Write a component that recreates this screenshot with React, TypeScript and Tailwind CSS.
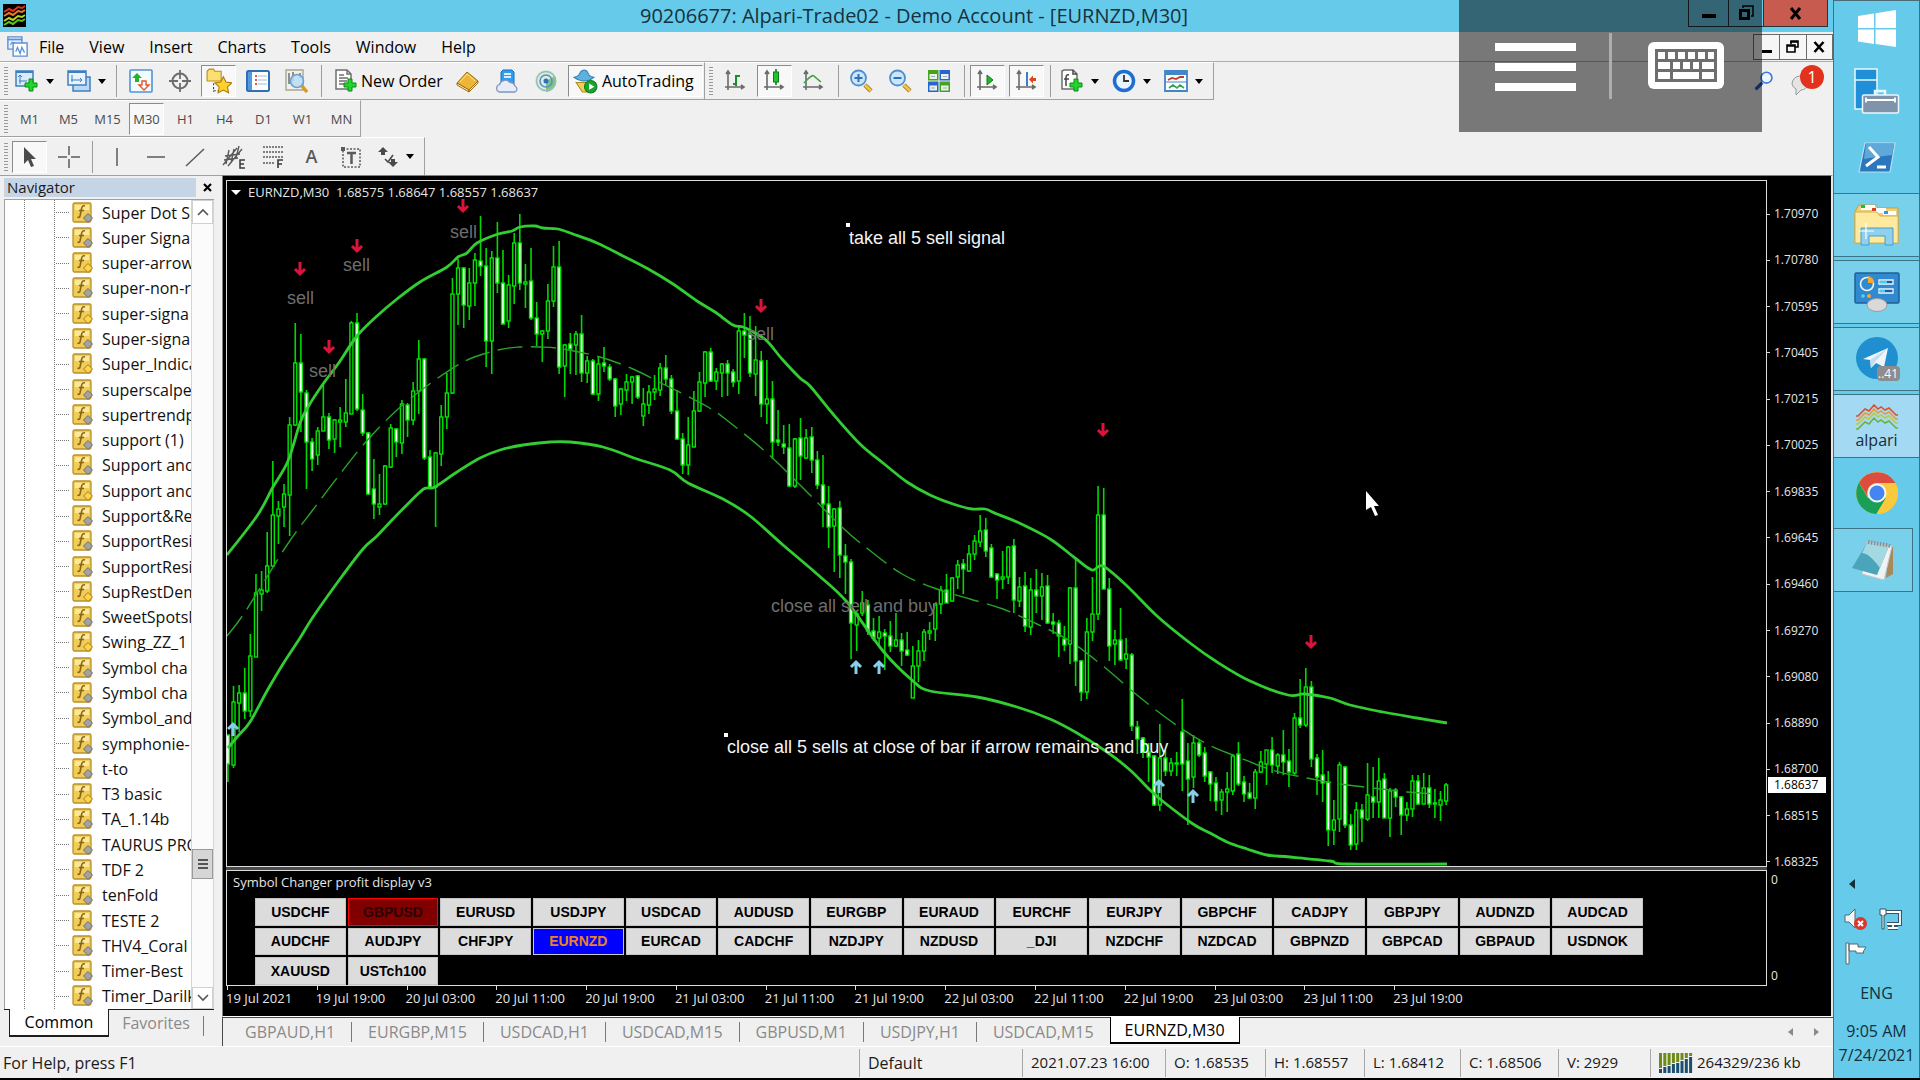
import { useState } from 'react';
import type { ReactNode } from 'react';

// [high, body top, body bottom, low, 1 = falling bar]
type Bar = [number, number, number, number, 0 | 1];

const BARS: Bar[] = [
  [555, 555, 584, 602, 1], [506, 522, 585, 588, 0], [505, 513, 523, 552, 0], [488, 513, 531, 539, 1], [454, 476, 531, 537, 0],
  [394, 413, 477, 477, 0], [391, 410, 414, 431, 0], [352, 386, 411, 413, 0], [281, 335, 386, 387, 0], [321, 329, 336, 364, 0],
  [304, 314, 327, 347, 0], [237, 245, 315, 356, 0], [143, 183, 245, 246, 0], [154, 183, 212, 252, 1], [210, 213, 262, 309, 1],
  [258, 262, 279, 291, 1], [247, 251, 275, 285, 0], [204, 237, 251, 251, 0], [233, 237, 260, 269, 1], [239, 240, 259, 273, 0],
  [227, 240, 242, 267, 0], [199, 233, 242, 247, 0], [141, 143, 234, 234, 0], [133, 143, 229, 231, 1], [214, 230, 253, 256, 1],
  [252, 253, 314, 315, 1], [279, 309, 324, 339, 1], [294, 324, 327, 335, 0], [285, 286, 324, 325, 0], [244, 248, 287, 288, 0],
  [248, 249, 262, 277, 1], [220, 224, 263, 274, 0], [223, 225, 240, 257, 1], [202, 211, 240, 245, 0], [160, 179, 211, 234, 0],
  [178, 179, 278, 280, 1], [270, 277, 307, 309, 1], [272, 273, 307, 347, 0], [225, 237, 274, 286, 0], [193, 213, 237, 249, 0],
  [98, 114, 213, 214, 0], [79, 88, 114, 145, 0], [87, 88, 125, 148, 1], [88, 103, 126, 140, 0], [73, 80, 103, 126, 0],
  [36, 81, 86, 96, 1], [68, 86, 161, 187, 1], [71, 78, 161, 194, 0], [42, 78, 103, 113, 1], [70, 103, 144, 144, 1],
  [95, 105, 141, 148, 0], [53, 63, 106, 124, 0], [34, 63, 103, 110, 1], [84, 102, 104, 128, 0], [68, 101, 138, 140, 1],
  [122, 138, 154, 166, 1], [150, 151, 154, 182, 0], [104, 121, 151, 159, 0], [66, 87, 121, 127, 0], [61, 87, 187, 194, 1],
  [164, 165, 186, 217, 0], [153, 164, 169, 194, 1], [151, 154, 165, 195, 0], [135, 154, 193, 202, 1], [176, 181, 193, 203, 0],
  [179, 181, 214, 215, 1], [177, 184, 214, 221, 0], [167, 183, 186, 192, 1], [184, 187, 199, 201, 1], [198, 199, 226, 237, 1],
  [208, 209, 224, 235, 0], [194, 202, 210, 221, 0], [196, 197, 202, 224, 0], [195, 196, 217, 219, 1], [208, 224, 236, 246, 0],
  [205, 212, 225, 234, 0], [195, 209, 212, 220, 0], [183, 188, 210, 216, 0], [175, 188, 199, 205, 1], [195, 199, 231, 234, 1],
  [210, 231, 259, 260, 1], [253, 259, 285, 294, 1], [237, 265, 285, 295, 0], [211, 231, 267, 267, 0], [192, 202, 231, 232, 0],
  [171, 172, 203, 217, 0], [168, 172, 201, 202, 1], [188, 192, 201, 210, 0], [183, 184, 193, 217, 0], [180, 184, 193, 216, 1],
  [189, 192, 202, 207, 1], [146, 151, 201, 214, 0], [133, 151, 155, 178, 1], [136, 154, 193, 197, 1], [146, 180, 194, 216, 0],
  [171, 181, 224, 237, 1], [180, 219, 224, 244, 0], [201, 219, 262, 279, 1], [230, 260, 262, 266, 1], [245, 264, 267, 274, 1],
  [244, 268, 306, 307, 1], [258, 259, 306, 308, 0], [238, 258, 276, 300, 1], [249, 258, 278, 279, 0], [247, 257, 280, 293, 1],
  [271, 280, 305, 309, 1], [275, 305, 324, 347, 1], [306, 324, 347, 368, 1], [328, 329, 346, 392, 0], [321, 328, 375, 398, 1],
  [364, 376, 382, 414, 1], [379, 382, 443, 479, 1], [431, 434, 445, 471, 0], [411, 423, 433, 436, 0], [420, 425, 451, 455, 1],
  [438, 451, 458, 461, 1], [436, 452, 458, 466, 0], [449, 453, 456, 490, 1], [441, 456, 466, 472, 1], [433, 460, 466, 467, 0],
  [453, 460, 471, 486, 1], [452, 470, 475, 476, 1], [466, 486, 518, 518, 0], [460, 471, 486, 502, 0], [449, 452, 471, 481, 0],
  [442, 451, 453, 460, 0], [423, 424, 449, 461, 0], [406, 410, 424, 434, 0], [394, 410, 423, 423, 1], [397, 398, 421, 422, 0],
  [380, 385, 397, 409, 0], [379, 384, 389, 414, 1], [365, 374, 391, 392, 0], [355, 361, 374, 380, 0], [335, 351, 362, 367, 0],
  [338, 350, 371, 377, 1], [364, 368, 397, 398, 1], [393, 394, 400, 419, 1], [371, 397, 399, 409, 0], [366, 367, 397, 404, 0],
  [359, 366, 420, 433, 1], [397, 407, 421, 427, 0], [392, 406, 446, 452, 1], [398, 410, 447, 455, 0], [389, 410, 416, 433, 1],
  [393, 407, 416, 440, 0], [395, 406, 443, 444, 1], [433, 442, 444, 454, 1], [440, 443, 456, 477, 1], [446, 459, 465, 471, 1],
  [407, 408, 464, 484, 0], [379, 408, 481, 506, 1], [480, 481, 512, 521, 1], [438, 452, 512, 519, 0], [397, 434, 452, 461, 0],
  [306, 335, 434, 440, 0], [308, 335, 409, 409, 1], [398, 409, 466, 481, 1], [450, 460, 464, 485, 0], [428, 460, 480, 481, 1],
  [458, 474, 479, 489, 0], [473, 475, 546, 551, 1], [541, 547, 559, 574, 1], [557, 558, 572, 578, 1], [563, 572, 577, 602, 1],
  [575, 576, 625, 626, 1], [544, 578, 625, 631, 0], [570, 578, 591, 596, 1], [578, 583, 591, 596, 0], [572, 583, 584, 596, 1],
  [519, 552, 584, 611, 1], [563, 581, 599, 645, 1], [555, 563, 597, 608, 0], [559, 563, 575, 577, 1], [567, 573, 596, 602, 1],
  [591, 592, 604, 621, 1], [597, 603, 621, 631, 1], [609, 612, 620, 635, 0], [592, 609, 612, 632, 0], [574, 576, 611, 615, 0],
  [562, 574, 604, 606, 1], [596, 602, 614, 622, 1], [603, 613, 618, 619, 1], [589, 592, 618, 629, 0], [571, 582, 592, 593, 0],
  [570, 570, 584, 605, 0], [557, 570, 585, 593, 1], [573, 575, 586, 594, 0], [550, 575, 582, 595, 1], [569, 581, 592, 607, 1],
  [533, 538, 593, 595, 0], [499, 538, 545, 548, 1], [488, 507, 545, 547, 0], [501, 507, 579, 587, 1], [574, 578, 597, 615, 1],
  [570, 595, 603, 622, 1], [591, 602, 650, 666, 1], [620, 640, 650, 665, 0], [582, 585, 639, 652, 0], [586, 587, 645, 648, 1],
  [634, 645, 665, 670, 1], [622, 630, 664, 670, 0], [624, 630, 638, 662, 1], [583, 615, 639, 641, 0], [587, 617, 622, 638, 1],
  [578, 601, 622, 638, 0], [593, 599, 638, 638, 1], [608, 611, 638, 657, 0], [608, 610, 617, 627, 1], [616, 617, 635, 655, 1],
  [622, 629, 635, 641, 0], [595, 601, 629, 637, 0], [595, 601, 624, 625, 1], [593, 608, 624, 624, 0], [595, 608, 624, 628, 1],
  [609, 623, 624, 638, 0], [611, 620, 625, 641, 0], [603, 605, 621, 625, 0],
];

const UPPER_BAND =
  '227,375 257,336 273,307 288,281 300,243 308,227 323,204 338,184 357,156 377,136 397,119 420,102 447,87 458,77 467,73 477,63 498,54 512,51 520,47 535,46 543,48 558,49 573,54 597,63 623,76 650,90 673,104 697,121 715,132 733,145 743,147 755,153 767,161 782,179 800,198 810,206 833,234 860,264 883,283 907,302 930,315 953,324 972,329 985,329 997,334 1017,342 1050,359 1075,378 1092,390 1103,386 1127,406 1157,436 1190,463 1217,482 1250,501 1288,515 1305,514 1330,518 1350,525 1383,532 1417,538 1447,543';
const LOWER_BAND =
  '228,568 238,556 250,542 267,511 283,484 300,458 313,437 340,399 363,369 377,356 393,339 420,312 427,308 435,307 457,292 480,278 500,270 523,265 550,262 570,262 603,267 637,279 670,290 688,303 723,319 750,336 783,365 817,394 847,422 883,471 913,501 930,511 977,517 1017,527 1050,539 1077,553 1107,572 1130,590 1150,610 1165,623 1193,644 1210,653 1227,662 1247,669 1267,675 1290,677 1330,681 1347,684 1447,684';
const MIDDLE_BAND =
  '227,456 245,432 287,365 312,331 337,298 364,264 397,230 431,203 465,181 498,170 520,167 540,167 563,169 600,177 633,189 663,204 708,227 733,245 767,273 800,305 843,348 868,369 902,394 937,409 970,419 1003,429 1037,444 1070,461 1103,486 1137,515 1172,542 1205,563 1238,577 1272,590 1307,598 1340,604 1373,608 1407,612 1440,614';

const SELL_ARROWS = [[300, 89], [357, 66], [463, 26], [329, 167], [761, 126], [1103, 250], [1311, 462]];
const BUY_ARROWS = [[233, 549], [856, 487], [879, 487], [1159, 606], [1193, 616]];
const NOTES: [number, number, string, string][] = [
  [287, 124, 'sell', '#6e6e6e'],
  [343, 91, 'sell', '#6e6e6e'],
  [450, 58, 'sell', '#6e6e6e'],
  [309, 197, 'sell', '#6e6e6e'],
  [747, 160, 'sell', '#6e6e6e'],
  [771, 432, 'close all sell and buy', '#6e6e6e'],
  [849, 64, 'take all 5 sell signal', '#f4f4f4'],
  [727, 573, 'close all 5 sells at close of bar if arrow remains and buy', '#f4f4f4'],
];

const PRICES = ['1.70970', '1.70780', '1.70595', '1.70405', '1.70215', '1.70025', '1.69835', '1.69645', '1.69460', '1.69270', '1.69080', '1.68890', '1.68700', '1.68515', '1.68325'];
const TIMES = [
  '19 Jul 2021', '19 Jul 19:00', '20 Jul 03:00', '20 Jul 11:00', '20 Jul 19:00', '21 Jul 03:00', '21 Jul 11:00',
  '21 Jul 19:00', '22 Jul 03:00', '22 Jul 11:00', '22 Jul 19:00', '23 Jul 03:00', '23 Jul 11:00', '23 Jul 19:00',
];

const SYMBOLS = [
  'USDCHF', 'GBPUSD', 'EURUSD', 'USDJPY', 'USDCAD', 'AUDUSD', 'EURGBP', 'EURAUD', 'EURCHF', 'EURJPY', 'GBPCHF', 'CADJPY', 'GBPJPY', 'AUDNZD', 'AUDCAD',
  'AUDCHF', 'AUDJPY', 'CHFJPY', 'EURNZD', 'EURCAD', 'CADCHF', 'NZDJPY', 'NZDUSD', '_DJI', 'NZDCHF', 'NZDCAD', 'GBPNZD', 'GBPCAD', 'GBPAUD', 'USDNOK',
  'XAUUSD', 'USTch100',
];

// true = indicator with a yellow badge
const INDICATORS: [string, boolean][] = [
  ['Super Dot Si', false], ['Super Signa', false], ['super-arrow', true], ['super-non-r', false],
  ['super-signa', true], ['Super-signa', false], ['Super_Indica', true], ['superscalpe', false],
  ['supertrendp', false], ['support (1)', false], ['Support and', false], ['Support and', true],
  ['Support&Re', false], ['SupportResi', false], ['SupportResi', false], ['SupRestDem', true],
  ['SweetSpotsM', false], ['Swing_ZZ_1', true], ['Symbol cha', false], ['Symbol cha', false],
  ['Symbol_and', false], ['symphonie-', false], ['t-to', false], ['T3 basic', true], ['TA_1.14b', false],
  ['TAURUS PRO', false], ['TDF 2', false], ['tenFold', false], ['TESTE 2', false], ['THV4_Coral', false],
  ['Timer-Best', false], ['Timer_Darilk', false],
];

const MENU = ['File', 'View', 'Insert', 'Charts', 'Tools', 'Window', 'Help'];
const TIMEFRAMES = ['M1', 'M5', 'M15', 'M30', 'H1', 'H4', 'D1', 'W1', 'MN'];
const CHART_TABS = ['GBPAUD,H1', 'EURGBP,M15', 'USDCAD,H1', 'USDCAD,M15', 'GBPUSD,M1', 'USDJPY,H1', 'USDCAD,M15', 'EURNZD,M30'];

/* ---------- small pieces ---------- */

function Svg({ children, size = 24 }: { children: ReactNode; size?: number }) {
  return (
    <svg width={size} height={size} viewBox="0 0 24 24" fill="none" className="shrink-0" aria-hidden="true">
      {children}
    </svg>
  );
}

function Plus() {
  return <path d="M14 10h4v4h4v4h-4v4h-4v-4h-4v-4h4z" fill="#1fd62a" stroke="#0b8a17" />;
}

function Caret() {
  return <span className="border-x-4 border-t-[5px] border-x-transparent border-t-black" />;
}

function Grip() {
  return <span className="mx-1 h-7 w-1 bg-[repeating-linear-gradient(#9a9a9a_0_1px,#f0f0f0_1px_3px)]" />;
}

function Sep() {
  return <span className="h-8 w-px shrink-0 bg-[#9c9c9c]" />;
}

function Tool({ label, active, caret, children }: { label: string; active?: boolean; caret?: boolean; children: ReactNode }) {
  return (
    <button
      aria-label={label}
      className={`flex h-8 shrink-0 items-center ${caret ? 'w-[52px] gap-[7px] pl-[3px]' : 'w-[35px] justify-center'} ${
        active ? 'border border-t-[#8c8c8c] border-l-[#8c8c8c] border-r-white border-b-white bg-[#f8f8f8]' : ''
      }`}
    >
      {children}
      {caret && <Caret />}
    </button>
  );
}

const Axes = () => <path d="M5 2v19M2 18h19M3 5l2-3 2 3M18 16l3 2-3 2" stroke="#6a6a6a" strokeWidth="1.6" />;

/* ---------- top of the window ---------- */

function TitleBar() {
  return (
    <header className="flex h-8 shrink-0 bg-[#66caea]">
      <div className="flex-1">
        <svg className="mt-1 ml-[3px]" width="23" height="23" viewBox="0 0 23 23" aria-hidden="true">
          <rect width="23" height="23" fill="#000" />
          <g fill="none" strokeWidth="2">
            <path d="M1 8l5-3 4 2 5-4 4 1 3-2" stroke="#e8311f" />
            <path d="M1 12l5-3 4 2 5-4 4 1 3-2" stroke="#ef7d1c" />
            <path d="M1 17l5-3 4 2 5-4 4 1 3-2" stroke="#b7d321" />
            <path d="M1 21l5-3 4 2 5-4 4 1 3-2" stroke="#5fc421" />
          </g>
        </svg>
      </div>
      <h1 className="pt-px text-center text-[20px] leading-[30px] text-[#16323c]">
        90206677: Alpari-Trade02 - Demo Account - [EURNZD,M30]
      </h1>
      <div className="flex flex-1 justify-end pr-[5px]">
        <div className="flex h-[27px] border border-t-0 border-[#26343a]">
          <button aria-label="Minimize" className="flex w-[39px] justify-center pt-3.5">
            <span className="h-1 w-3.5 bg-black" />
          </button>
          <button aria-label="Restore" className="flex w-9 items-center justify-center border-x border-[#26343a]">
            <svg width="16" height="16" viewBox="0 0 16 16" fill="none" stroke="#000" aria-hidden="true">
              <path d="M5 3V1h10v10h-2" strokeWidth="1.5" />
              <path d="M2.5 5.5h8v8h-8z" strokeWidth="3" />
            </svg>
          </button>
          <button aria-label="Close" className="flex w-[63px] items-center justify-center bg-[#c75b50]">
            <svg width="13" height="13" viewBox="0 0 13 13" aria-hidden="true">
              <path d="M2 1l9 11M11 1L2 12" stroke="#000" strokeWidth="3" />
            </svg>
          </button>
        </div>
      </div>
    </header>
  );
}

function MenuBar() {
  return (
    <nav className="flex h-[29px] shrink-0 items-center gap-[25px] pl-[7px]">
      <span className="-mr-3.5 flex">
        <Svg size={21}>
          <path d="M1 1h16v14H1z" fill="#e6f0fc" stroke="#5b8fd6" strokeWidth="1.6" />
          <path d="M1 4h16" stroke="#5b8fd6" strokeWidth="2" />
          <path d="M7 8h16v15H7z" fill="#fff" stroke="#5b8fd6" strokeWidth="1.6" />
          <path d="M10 18l2-5 3 7 2-7 3 6" stroke="#5b8fd6" strokeWidth="1.5" />
          <path d="M4 10l2-3 3 1" stroke="#5b8fd6" strokeWidth="1.4" />
        </Svg>
      </span>
      {MENU.map((item) => (
        <button key={item} className="text-[16px] leading-6 text-black">{item}</button>
      ))}
      <div className="ml-auto flex h-[26px] w-20 border border-[#6b6b6b] bg-[#f6f6f6]">
        <button aria-label="Minimize chart" className="flex flex-1 items-end justify-center pb-1.5">
          <span className="h-[3px] w-2.5 bg-black" />
        </button>
        <button aria-label="Restore chart" className="flex flex-1 items-center justify-center border-x border-[#6b6b6b]">
          <svg width="13" height="13" viewBox="0 0 13 13" fill="none" stroke="#000" strokeWidth="1.6" aria-hidden="true">
            <path d="M5 4V1h7v6H9M4 2h8M1 5h8v7H1zM1 6h8" />
          </svg>
        </button>
        <button aria-label="Close chart" className="flex flex-1 items-center justify-center">
          <svg width="12" height="12" viewBox="0 0 12 12" aria-hidden="true">
            <path d="M1.5 1l9 10M10.5 1l-9 10" stroke="#000" strokeWidth="2.6" />
          </svg>
        </button>
      </div>
    </nav>
  );
}

function MainToolbar() {
  return (
    <div className="flex h-[39px] shrink-0 border-t border-[#adadad]">
      <div className="flex items-center border-t border-r border-b border-[#a0a0a0] border-t-white pr-px">
        <Grip />
        <Tool label="New chart" caret>
          <Svg>
            <path d="M1 2h17v15H1z" fill="#dcebfa" stroke="#3f7fbd" strokeWidth="1.5" />
            <path d="M1 3h17" stroke="#3f7fbd" strokeWidth="2" />
            <path d="M5 6v9M3 8l2-2 2 2M4 12h8" stroke="#3f7fbd" />
            <Plus />
          </Svg>
        </Tool>
        <Tool label="Profiles" caret>
          <Svg>
            <path d="M6 8h17v14H6z" fill="#bcd8f3" stroke="#3f7fbd" strokeWidth="1.5" />
            <path d="M1 2h18v14H1z" fill="#e9f3fd" stroke="#3f7fbd" strokeWidth="1.5" />
            <path d="M1 3h18" stroke="#3f7fbd" strokeWidth="2" />
            <path d="M5 6v7M4 11h11M13 9l2 2-2 2" stroke="#3f7fbd" />
          </Svg>
        </Tool>
        <Sep />
        <span className="w-1.5" />
        <Tool label="Market watch">
          <Svg>
            <rect x="1" y="1" width="22" height="22" rx="1" fill="#f4faff" stroke="#4d94d6" strokeWidth="1.6" />
            <path d="M8 4l5 5h-3v4H6V9H3z" fill="#22b52a" />
            <path d="M15 21l-5-5h3v-4h4v4h3z" fill="#fff" stroke="#e2562b" strokeWidth="1.4" />
          </Svg>
        </Tool>
        <span className="w-1" />
        <Tool label="Data window">
          <Svg>
            <circle cx="12" cy="12" r="7.5" stroke="#6d6d6d" strokeWidth="2" />
            <path d="M12 1v9M12 14v9M1 12h9M14 12h9" stroke="#6d6d6d" strokeWidth="1.8" />
          </Svg>
        </Tool>
        <span className="w-1" />
        <Tool label="Navigator" active>
          <Svg size={26}>
            <path d="M1 3l2-2h4l1 2h6v9H1z" fill="#fbdf72" stroke="#b98d1c" />
            <path d="M7 14v8M7 21h4" stroke="#444" strokeDasharray="2 1.5" />
            <path d="M16 8l2.4 5 5.4.7-4 3.8 1 5.4-4.8-2.6-4.8 2.6 1-5.4-4-3.8 5.4-.7z" fill="#ffd22e" stroke="#a97c10" />
          </Svg>
        </Tool>
        <span className="w-1" />
        <Tool label="Terminal">
          <Svg>
            <rect x="1" y="2" width="22" height="20" rx="1.5" fill="#fff" stroke="#2f6fb5" strokeWidth="2" />
            <path d="M2 3h4v18H2z" fill="#5598dc" />
            <path d="M9 7h2M9 11h2M9 15h2" stroke="#e02020" strokeWidth="1.6" />
            <path d="M12 7h9M12 11h9M12 15h9" stroke="#9db9d8" />
          </Svg>
        </Tool>
        <span className="w-1" />
        <Tool label="Strategy tester">
          <Svg>
            <path d="M1 1h17v20H1z" fill="#f3f1e7" stroke="#a8a496" strokeWidth="1.4" />
            <path d="M4 4v11M8 3v9M15 4v5" stroke="#777" strokeWidth="1.6" />
            <circle cx="12" cy="12" r="6.5" fill="#b9dcf5" fillOpacity=".85" stroke="#6aa1d4" strokeWidth="1.6" />
            <path d="M17 17l5 6" stroke="#d89c1d" strokeWidth="3.4" />
          </Svg>
        </Tool>
        <span className="w-[7px]" />
        <Sep />
        <button className="flex h-8 items-center gap-[3px] pl-3 text-[16px] text-black">
          <Svg>
            <path d="M2 1h11l4 4v15H2z" fill="#fff" stroke="#6d6d6d" strokeWidth="1.5" />
            <path d="M13 1v4h4M5 6h5M5 9h9M5 12h8M5 15h6" stroke="#6d6d6d" strokeWidth="1.4" />
            <Plus />
          </Svg>
          New Order
        </button>
        <span className="w-2" />
        <Tool label="MetaEditor">
          <Svg>
            <path d="M1 14L11 3l11 9-9 9z" fill="#eeb537" stroke="#9c6a10" />
            <path d="M1 14l12 7v2L1 16zM13 23l9-9v-2l-9 9z" fill="#fdf3cf" stroke="#9c6a10" />
            <path d="M4 13l7-8 8 7" stroke="#ffe391" />
          </Svg>
        </Tool>
        <span className="w-1" />
        <Tool label="Market">
          <Svg>
            <path d="M6 3l2-2h9l2 2v12H6z" fill="#2d9ef0" stroke="#1573bf" />
            <path d="M9 5h7M9 8h7" stroke="#d9efff" strokeWidth="2" />
            <path d="M4 23a4 4 0 01.5-7.5 6 6 0 0110.5-2 5 5 0 015 3.500 3.300 3.300 0 010 6z" fill="#e6ecf8" stroke="#8094bd" strokeWidth="1.3" />
          </Svg>
        </Tool>
        <span className="w-1" />
        <Tool label="Signals">
          <Svg>
            <circle cx="12" cy="12" r="11" fill="#dcebdc" />
            <path d="M12 12v11a11 11 0 009-16z" fill="#58b15a" fillOpacity=".7" />
            <circle cx="12" cy="12" r="9.5" stroke="#93bfb4" strokeWidth="1.5" />
            <circle cx="12" cy="12" r="6" stroke="#5590cb" strokeWidth="1.5" />
            <circle cx="12" cy="12" r="2.5" fill="#2f6fc0" />
          </Svg>
        </Tool>
        <span className="w-1" />
        <button className="flex h-8 items-center gap-1 border border-t-[#8c8c8c] border-l-[#8c8c8c] border-r-white border-b-white bg-[#f8f8f8] pr-2 pl-1 text-[16px] text-black">
          <Svg size={25}>
            <path d="M3 13h16l-6 9H9z" fill="#f3cf54" stroke="#b28a1b" />
            <path d="M1 8q5-1 6-5 4-4 7 0 1 4 6 5-9 7-19 0z" fill="#5eb0df" stroke="#2f7fb2" />
            <circle cx="17" cy="17" r="6" fill="#18a52c" stroke="#0d7a1c" />
            <path d="M15.5 14l5 3-5 3z" fill="#fff" />
          </Svg>
          AutoTrading
        </button>
      </div>

      <div className="flex items-center border-t border-r border-b border-[#a0a0a0] border-t-white">
        <Grip />
        <span className="w-px" />
        <Tool label="Bar chart">
          <Svg><Axes /><path d="M13 6v11M13 7h4M10 15h3" stroke="#17912a" strokeWidth="2" /></Svg>
        </Tool>
        <span className="w-1" />
        <Tool label="Candlesticks" active>
          <Svg><Axes /><path d="M14 0v16" stroke="#0e7a1e" strokeWidth="1.6" /><rect x="11.5" y="3" width="5" height="10" fill="#1fc52e" stroke="#0e7a1e" /></Svg>
        </Tool>
        <span className="w-1" />
        <Tool label="Line chart">
          <Svg><Axes /><path d="M3 14q8-9 10-7t7 6" stroke="#3fa64a" strokeWidth="1.6" /></Svg>
        </Tool>
        <span className="w-[7px]" />
        <Sep />
        <span className="w-[5px]" />
        {['Zoom in', 'Zoom out'].map((label) => (
          <span key={label} className="mr-1 flex">
            <Tool label={label}>
              <Svg>
                <path d="M16 16l6 6" stroke="#9a6d12" strokeWidth="4.5" />
                <path d="M16 16l6 6" stroke="#f1c548" strokeWidth="3" />
                <circle cx="9.5" cy="9" r="7.5" fill="#cbe6fa" stroke="#4f8fce" strokeWidth="1.8" />
                <path d={label === 'Zoom in' ? 'M9.5 5v8M5.5 9h8' : 'M5.5 9h8'} stroke="#2d70b4" strokeWidth="2" />
              </Svg>
            </Tool>
          </span>
        ))}
        <Tool label="Tile windows">
          <Svg>
            <path d="M1 1h10.5v10.5H1zM12.5 12.5H23V23H12.5z" fill="#45a41c" />
            <path d="M12.5 1H23v10.5H12.500zM1 12.5h10.5V23H1z" fill="#2a62d0" />
            <path d="M2.5 5H10v5H2.500zM14 5h7.5v5H14zM2.5 16.5H10v5H2.500zM14 16.5h7.5v5H14z" fill="#e8f2e6" />
            <path d="M4 7.5h4M16 7.5h4M4 19h4M16 19h4" stroke="#9ac" />
          </Svg>
        </Tool>
        <span className="w-[7px]" />
        <Sep />
        <span className="w-[5px]" />
        <Tool label="Auto scroll" active>
          <Svg><Axes /><path d="M12 6l6 5-6 5z" fill="#22b52a" stroke="#0e7a1e" /></Svg>
        </Tool>
        <span className="w-1" />
        <Tool label="Chart shift" active>
          <Svg><Axes /><path d="M13 3v14" stroke="#2c6fc2" strokeWidth="1.8" /><path d="M15 10.5l4-4V9h3v3h-3v2.500z" fill="#d9471d" /></Svg>
        </Tool>
        <span className="w-1.5" />
        <Sep />
        <span className="w-1.5" />
        <Tool label="Indicators" caret>
          <Svg>
            <path d="M2 2l2-1h9l4 4v15H2z" fill="#fff" stroke="#6d6d6d" strokeWidth="1.5" />
            <path d="M13 1v4h4M9 6q-3-1-3 3v8M4 10h5" stroke="#444" strokeWidth="1.5" />
            <Plus />
          </Svg>
        </Tool>
        <Tool label="Periods" caret>
          <Svg>
            <circle cx="12" cy="12" r="9.5" fill="#eaf4fd" stroke="#1f6fd0" strokeWidth="3.5" />
            <path d="M12 6v6h5" stroke="#333" strokeWidth="1.8" />
          </Svg>
        </Tool>
        <Tool label="Templates" caret>
          <Svg>
            <path d="M1 2h22v20H1z" fill="#fff" stroke="#3f87c9" strokeWidth="1.8" />
            <path d="M1 4h22" stroke="#3f87c9" strokeWidth="4" />
            <path d="M1 13h22" stroke="#3f87c9" />
            <path d="M4 11l4-2 4 1 4-2h4" stroke="#c23a22" strokeWidth="1.8" />
            <path d="M5 19l4-3 4 3 3-3 4 3" stroke="#2fa24c" strokeWidth="1.6" />
          </Svg>
        </Tool>
      </div>

      <div className="ml-auto flex items-center gap-4 pr-[7px]">
        <button aria-label="Search">
          <Svg size={20}>
            <path d="M2 22l8-8" stroke="#2458b8" strokeWidth="4" />
            <circle cx="15" cy="8" r="6.5" fill="#eef5ff" stroke="#3f78e0" strokeWidth="2" />
          </Svg>
        </button>
        <button aria-label="Messages" className="relative h-8 w-9">
          <svg className="mt-2" width="22" height="22" viewBox="0 0 22 22" aria-hidden="true">
            <path d="M2 10a8 8 0 0116 0 7 7 0 01-7 6l-5 5v-6a7 7 0 01-4-5z" fill="#e4e4e4" stroke="#9a9a9a" />
          </svg>
          <span className="absolute top-0 right-0.5 flex size-6 items-center justify-center rounded-full bg-[#e2321d] text-[16px] leading-none text-white">1</span>
        </button>
      </div>
    </div>
  );
}

function TimeframeBar() {
  const [active, setActive] = useState('M30');
  return (
    <div className="flex h-[37px] shrink-0">
      <div className="flex items-center gap-1 border-t border-r border-b border-[#a0a0a0] border-t-white pr-px">
        <span className="-mr-1 flex"><Grip /></span>
        {TIMEFRAMES.map((tf) => (
          <button
            key={tf}
            onClick={() => setActive(tf)}
            className={`h-8 w-[35px] pt-0.5 text-[13px] text-[#4a4a4a] ${
              tf === active ? 'border border-t-[#8c8c8c] border-l-[#8c8c8c] border-r-white border-b-white bg-[#f8f8f8]' : ''
            }`}
          >
            {tf}
          </button>
        ))}
      </div>
    </div>
  );
}

function DrawingBar() {
  return (
    <div className="flex h-[38px] shrink-0">
      <div className="flex items-center gap-1 border-t border-r border-[#a0a0a0] border-t-white">
        <span className="-mr-1 flex"><Grip /></span>
        <Tool label="Cursor" active>
          <Svg><path d="M6 2v17l4-4 3 7 3-1-3-7h5z" fill="#4a4a4a" /></Svg>
        </Tool>
        <Tool label="Crosshair">
          <Svg><path d="M12 1v9M12 14v9M1 12h9M14 12h9" stroke="#5a5a5a" strokeWidth="1.5" /></Svg>
        </Tool>
        <span className="mx-0.5 flex"><Sep /></span>
        <Tool label="Vertical line"><Svg><path d="M12 3v18" stroke="#5a5a5a" strokeWidth="1.5" /></Svg></Tool>
        <Tool label="Horizontal line"><Svg><path d="M3 12h18" stroke="#5a5a5a" strokeWidth="1.5" /></Svg></Tool>
        <Tool label="Trendline"><Svg><path d="M3 21L21 4" stroke="#5a5a5a" strokeWidth="1.5" /></Svg></Tool>
        <Tool label="Equidistant channel">
          <Svg>
            <path d="M1 20L15 3M6 21L20 4M3 11l15-2M2 15l14-2M7 5l-3 14M12 4l-3 14M17 1l-3 12" stroke="#5a5a5a" strokeWidth="1.4" />
            <path d="M23 15h-5v8h5M18 19h4" stroke="#3a3a3a" strokeWidth="1.5" />
          </Svg>
        </Tool>
        <Tool label="Fibonacci">
          <Svg>
            <path d="M2 2h20M2 7h20M2 12h20M2 18h12" stroke="#5a5a5a" strokeWidth="1.5" strokeDasharray="2 1" />
            <path d="M22 15h-5v8M17 19h4" stroke="#3a3a3a" strokeWidth="1.6" />
          </Svg>
        </Tool>
        <Tool label="Text"><span className="text-[18px] font-semibold text-[#5a5a5a]">A</span></Tool>
        <Tool label="Text label">
          <Svg>
            <rect x="4" y="4" width="17" height="18" stroke="#5a5a5a" strokeWidth="1.5" strokeDasharray="2 1.5" />
            <path d="M8 8h9M12.5 8v11" stroke="#5a5a5a" strokeWidth="2.5" />
            <path d="M2 2h4v4H2z" fill="#5a5a5a" />
          </Svg>
        </Tool>
        <Tool label="Arrows" caret>
          <Svg>
            <path d="M8 2l5 5h-3v3H6V7H3zM18 22l-5-5h3v-3h4v3h3z" fill="#4a4a4a" />
            <path d="M10 14l3 3 5-7" stroke="#4a4a4a" strokeWidth="1.6" />
          </Svg>
        </Tool>
      </div>
    </div>
  );
}

/* ---------- navigator ---------- */

function IndicatorIcon({ yellow }: { yellow: boolean }) {
  return (
    <svg width="22" height="22" viewBox="0 0 22 22" fill="none" className="shrink-0" aria-hidden="true">
      <rect x="1" y="1" width="18" height="19" rx="1.5" fill="#f0cd58" stroke="#b9912a" strokeWidth="1.3" />
      <path d="M3 3h14v5H3z" fill="#fbe89a" />
      <path d="M13 4q-3-1-3.500 3L8 14q-.5 2-2.500 1M7 8.500h5" stroke="#8b6410" strokeWidth="1.6" />
      <path d="M16 11.500l4.500 4.500-4.500 4.500-4.500-4.500z" fill={yellow ? '#ffd34a' : '#a3a3a3'} stroke={yellow ? '#a47b14' : '#6c6c6c'} />
    </svg>
  );
}

function Navigator() {
  return (
    <aside className="flex w-[222px] shrink-0 flex-col border-t border-[#a0a0a0] pt-px pr-2 pl-1">
      <div className="flex h-5 shrink-0 items-center">
        <h2 className="h-[19px] flex-1 bg-[#c6d5e6] pl-[3px] text-[15px] leading-[18px] text-[#1a1a1a]">Navigator</h2>
        <button aria-label="Close navigator" className="-mr-1 flex w-[22px] justify-center">
          <svg width="9" height="9" viewBox="0 0 9 9" aria-hidden="true">
            <path d="M1 1l7 7M8 1L1 8" stroke="#000" strokeWidth="2.2" />
          </svg>
        </button>
      </div>
      <div className="mt-0.5 flex min-h-0 flex-1 border-t border-l border-[#a0a0a0] bg-white">
        <ul className="relative flex min-w-0 flex-1 flex-col overflow-hidden pl-[19px]">
          <li aria-hidden="true" className="absolute inset-y-0 left-[19px] w-[31px] border-x border-dotted border-[#777]" />
          {INDICATORS.map(([name, yellow], i) => (
            <li key={i} className="flex min-h-0 flex-1 items-center">
              <span className="mr-[3px] ml-8 w-[13px] shrink-0 border-t border-dotted border-[#777]" />
              <IndicatorIcon yellow={yellow} />
              <span className="ml-2 text-[16px] leading-5 whitespace-nowrap text-[#111]">{name}</span>
            </li>
          ))}
        </ul>
        <div className="flex w-[23px] shrink-0 flex-col border-x border-[#d5d5d5] bg-[#fbfbfb]">
          <button aria-label="Scroll up" className="flex h-6 items-center justify-center border border-[#d0d0d0] bg-white">
            <svg width="12" height="8" viewBox="0 0 12 8" fill="none" aria-hidden="true"><path d="M1 7l5-5 5 5" stroke="#555" strokeWidth="1.6" /></svg>
          </button>
          <span className="flex-[624]" />
          <span className="flex h-[30px] flex-col items-center justify-center gap-0.5 border border-[#9a9a9a] bg-[#d6d6d6]">
            <i className="h-0.5 w-2.5 bg-[#555]" />
            <i className="h-0.5 w-2.5 bg-[#555]" />
            <i className="h-0.5 w-2.5 bg-[#555]" />
          </span>
          <span className="flex-[108]" />
          <button aria-label="Scroll down" className="flex h-[22px] items-center justify-center border border-[#d0d0d0] bg-white">
            <svg width="12" height="8" viewBox="0 0 12 8" fill="none" aria-hidden="true"><path d="M1 1l5 5 5-5" stroke="#555" strokeWidth="1.6" /></svg>
          </button>
        </div>
      </div>
      <div className="flex h-[37px] shrink-0 items-start border-t border-[#1e1e1e] pl-[5px] text-[16px] leading-[26px]">
        <button className="-mt-px h-7 w-[100px] border border-t-0 border-b-2 border-[#1e1e1e] bg-white text-black">Common</button>
        <button className="w-[94px] text-[#8a8a8a]">Favorites</button>
        <span className="mt-1.5 h-5 w-px bg-[#7a7a7a]" />
      </div>
    </aside>
  );
}

/* ---------- chart ---------- */

// Catmull-Rom spline through "x,y x,y ..." points
function smooth(points: string) {
  const p = points.split(' ').map((pair) => pair.split(',').map(Number));
  let d = `M${p[0][0]} ${p[0][1]}`;
  for (let i = 0; i < p.length - 1; i++) {
    const a = p[Math.max(i - 1, 0)];
    const b = p[i];
    const c = p[i + 1];
    const e = p[Math.min(i + 2, p.length - 1)];
    d += `C${b[0] + (c[0] - a[0]) / 6} ${b[1] + (c[1] - a[1]) / 6} ${c[0] - (e[0] - b[0]) / 6} ${c[1] - (e[1] - b[1]) / 6} ${c[0]} ${c[1]}`;
  }
  return d;
}

// bar series and bands are stored in window coordinates; the plot starts at 227,1
function PriceChart() {
  return (
    <svg className="absolute inset-0 h-full w-full" aria-label="EURNZD M30 candlesticks">
      <g transform="translate(-227 -1)" fill="none">
        {BARS.map(([high, top, bottom, low, falling], i) => {
          const x = 227.9 + i * 5.614;
          return (
            <g key={i}>
              <rect x={x - 0.8} y={high} width={1.6} height={low - high} fill="#00d800" />
              <rect
                x={x - 1.5}
                y={top}
                width={3}
                height={Math.max(bottom - top, 1)}
                fill={falling ? '#fff' : '#000'}
                stroke="#00e600"
                strokeWidth={1.4}
              />
            </g>
          );
        })}
        <path d={smooth(MIDDLE_BAND)} stroke="#28a428" strokeWidth="1.4" strokeDasharray="25 8.5" />
        <path d={smooth(UPPER_BAND)} stroke="#32cd32" strokeWidth="2.8" />
        <path d={smooth(LOWER_BAND)} stroke="#32cd32" strokeWidth="2.8" />
        {SELL_ARROWS.map(([x, y]) => (
          <path key={x} d={`M${x} ${y - 7}v12M${x - 5} ${y}l5 5 5-5`} stroke="#dc143c" strokeWidth="3" />
        ))}
        {BUY_ARROWS.map(([x, y]) => (
          <path key={x} d={`M${x} ${y + 7}v-12M${x - 5} ${y}l5-5 5 5`} stroke="#87ceeb" strokeWidth="3" />
        ))}
        <path d="M846 43h4v4h-4zM724 553h4v4h-4z" fill="#fff" />
        {NOTES.map(([x, y, text, color]) => (
          <text key={`${x}-${y}`} x={x} y={y} fill={color} fontSize="18" className="font-['Liberation_Sans',Arial,sans-serif]">
            {text}
          </text>
        ))}
        <path d="M1366 311v19l5-3 4 9 3-1-4-9h5z" fill="#fff" />
      </g>
    </svg>
  );
}

function symbolClass(symbol: string) {
  if (symbol === 'GBPUSD') return 'border-[#ff0000] bg-[#800000] text-[#2a0000]';
  if (symbol === 'EURNZD') return 'border-[#c8c8c8] bg-[#0000ff] text-[#e8822a]';
  return 'border-[#c4c4c4] bg-[#dcdcdc] text-black';
}

function ChartWindow() {
  return (
    <section className="flex min-h-0 flex-1 border-t border-r-2 border-b border-l border-t-[#808080] border-r-[#e8e8e8] border-b-white border-l-[#808080] bg-black pt-1 pl-[3px] text-[#e6e6e6]">
      <div className="flex min-w-0 flex-1 flex-col">
        <div className="relative min-h-0 flex-1 overflow-hidden border border-[#dcdcdc]">
          <PriceChart />
          <p className="relative flex items-center gap-[7px] pt-[3px] pl-1 text-[13px] leading-4 whitespace-pre">
            <span className="border-x-[5px] border-t-[5px] border-x-transparent border-t-white" />
            {'EURNZD,M30  1.68575 1.68647 1.68557 1.68637'}
          </p>
        </div>
        <div className="h-[3px] shrink-0 bg-[#4a4a4a]" />
        <div className="h-[116px] shrink-0 border border-[#dcdcdc]">
          <p className="pt-[3px] pl-1.5 text-[13px] leading-4">Symbol Changer profit display v3</p>
          <div className="mt-2 ml-7 grid h-[87px] w-[1388px] grid-cols-15 grid-rows-3 gap-0.5">
            {SYMBOLS.map((symbol) => (
              <button
                key={symbol}
                className={`border font-['Liberation_Sans',Arial,sans-serif] text-[14px] leading-none font-bold ${symbolClass(symbol)}`}
              >
                {symbol}
              </button>
            ))}
          </div>
        </div>
        <ol className="grid h-[30px] w-[1257px] shrink-0 grid-cols-14 text-[13px] leading-4 whitespace-nowrap">
          {TIMES.map((time) => (
            <li key={time}>
              <span className="ml-px block h-1 w-px bg-[#dcdcdc]" />
              {time}
            </li>
          ))}
        </ol>
      </div>
      <div className="flex w-16 shrink-0 flex-col text-[12px]">
        <ol className="relative flex min-h-0 flex-1 flex-col justify-between pt-6">
          {PRICES.map((price) => (
            <li key={price} className="flex h-5 items-center gap-1">
              <span className="h-px w-[3px] bg-[#dcdcdc]" />
              {price}
            </li>
          ))}
          <li className="absolute top-[597px] left-px h-4 w-[58px] bg-white pl-1.5 leading-4 text-black">1.68637</li>
        </ol>
        <div className="flex h-[114px] shrink-0 flex-col justify-between pb-0.5 pl-1 leading-4">
          <span>0</span>
          <span>0</span>
        </div>
        <div className="h-[30px] shrink-0" />
      </div>
    </section>
  );
}

function ChartTabs() {
  const last = CHART_TABS.length - 1;
  return (
    <div className="flex h-[29px] shrink-0 border-t border-l border-[#4a4a4a] pl-1.5 text-[16px] leading-[26px] text-[#8a8a8a]">
      {CHART_TABS.map((tab, i) =>
        i === last ? (
          <button key={i} className="-mt-px h-[27px] border border-t-0 border-b-2 border-black bg-white px-3.5 text-black">{tab}</button>
        ) : (
          <span key={i} className="flex items-center">
            <button className="h-full px-4">{tab}</button>
            {i < last - 1 && <span className="h-5 w-px bg-[#7a7a7a]" />}
          </span>
        ),
      )}
      <div className="ml-auto flex items-center gap-[21px] pr-3.5">
        <span className="border-y-4 border-r-[5px] border-y-transparent border-r-[#8a8a8a]" />
        <span className="border-y-4 border-l-[5px] border-y-transparent border-l-[#8a8a8a]" />
      </div>
    </div>
  );
}

function StatusBar() {
  const cell = 'flex h-7 items-center border-l border-[#a8a8a8] pl-2';
  return (
    <footer className="flex h-8 shrink-0 items-center border-t border-white text-[15px] text-[#1a1a1a]">
      <span className="flex-1 pl-[3px] text-[16px]">For Help, press F1</span>
      <span className={`${cell} w-[163px] text-[16px]`}>Default</span>
      <span className={`${cell} w-[143px]`}>2021.07.23 16:00</span>
      <span className={`${cell} w-[100px]`}>O: 1.68535</span>
      <span className={`${cell} w-[99px]`}>H: 1.68557</span>
      <span className={`${cell} w-24`}>L: 1.68412</span>
      <span className={`${cell} w-[98px]`}>C: 1.68506</span>
      <span className={`${cell} w-[92px]`}>V: 2929</span>
      <span className={`${cell} w-[183px] gap-1`}>
        <svg width="34" height="20" viewBox="0 0 34 20" aria-hidden="true">
          {[16, 14, 13, 11, 10, 8, 6, 4].map((y, i) => (
            <g key={i}>
              <rect x={i * 4.3} y="0" width="3" height={y - 1} fill="#6c8a14" />
              <rect x={i * 4.3} y={y} width="3" height={20 - y} fill="#1b4f70" />
            </g>
          ))}
        </svg>
        264329/236 kb
      </span>
    </footer>
  );
}

/* ---------- desktop taskbar ---------- */

const LOOKS = {
  idle: '',
  open: 'border-y border-[#3b7487] bg-[#79d0ea]',
  stacked: 'mr-1.5 border-y border-r border-[#3b7487] bg-[#79d0ea]',
  active: 'border-y border-[#3b7487] bg-[#a3d9f3]',
};

function TaskButton({ label, look = 'idle', children }: { label: string; look?: keyof typeof LOOKS; children: ReactNode }) {
  return (
    <button aria-label={label} className={`flex h-16 shrink-0 flex-col items-center justify-center ${LOOKS[look]}`}>
      {children}
    </button>
  );
}

function Taskbar() {
  return (
    <aside className="flex w-[87px] shrink-0 flex-col gap-[3px] border-x border-t border-[#4d6b76] bg-[#66caea] text-[#12303a]">
      <button aria-label="Start" className="flex h-[55px] shrink-0 items-center justify-center">
        <svg width="38" height="38" viewBox="0 0 38 38" fill="#fff" aria-hidden="true">
          <path d="M0 6l16-2.500V18H0zM17.500 3.300L38 0v18H17.500zM0 19.500h16V34L0 31.500zM17.500 19.500H38V37l-20.500-3z" />
        </svg>
      </button>
      <TaskButton label="Server Manager">
        <svg width="46" height="46" viewBox="0 0 46 46" aria-hidden="true">
          <path d="M1 1h22v40H1z" fill="#1f8fd8" stroke="#e9f7fd" strokeWidth="1.5" />
          <path d="M1 12h22" stroke="#e9f7fd" strokeWidth="1.5" />
          <path d="M21 27v-4h10v4" fill="none" stroke="#e9f7fd" strokeWidth="2.5" />
          <rect x="8.500" y="27" width="36" height="18" rx="1.5" fill="#7f94ab" stroke="#e9f7fd" strokeWidth="1.5" />
          <path d="M12 32h29M12 29.500v5M41 29.500v5" stroke="#fff" strokeWidth="1.8" />
        </svg>
      </TaskButton>
      <TaskButton label="PowerShell">
        <svg width="38" height="32" viewBox="0 0 38 32" aria-hidden="true">
          <path d="M7 1h30l-5 29H1z" fill="#2b77bd" stroke="#b9dff4" strokeWidth="1.2" />
          <path d="M8 2h28l-2 11Q16 15 6 17z" fill="#5fa9d8" />
          <path d="M11 5l9 10-12 9M19 25h9" fill="none" stroke="#fff" strokeWidth="3" />
        </svg>
      </TaskButton>
      <TaskButton label="File Explorer" look="open">
        <svg width="46" height="42" viewBox="0 0 46 42" aria-hidden="true">
          <path d="M3 4l2-3h17l2 3h20v35H1V8z" fill="#edd078" stroke="#c79f3f" />
          <path d="M7 1h14v5H7zM18 4h14v5H18zM29 7h13v4H29z" fill="#fff" />
          <path d="M7 1h4v3H7z" fill="#18c32d" /><path d="M18 4h4v3h-4z" fill="#d3442c" /><path d="M30 7h4v3h-4z" fill="#2f9be6" />
          <path d="M1 8h22l3 4h18v27H1z" fill="#fdea9f" stroke="#d5b04f" />
          <path d="M7 41V24h32v17h-8v-9H15v9z" fill="#8fd0ee" stroke="#4a9cc9" />
          <path d="M12 19v16M5 27h15" stroke="#fff" strokeWidth="1.2" />
        </svg>
      </TaskButton>
      <TaskButton label="Control Panel" look="open">
        <svg width="46" height="40" viewBox="0 0 46 40" aria-hidden="true">
          <rect x="1" y="1" width="44" height="30" rx="1.5" fill="#3189cf" stroke="#1f5f97" strokeWidth="1.5" />
          <circle cx="13" cy="12" r="6.5" fill="none" stroke="#eaf6fd" strokeWidth="1.6" />
          <path d="M14 11V4a7 7 0 016 7z" fill="#f7a92b" />
          <path d="M25 8h14v4H25zM25 17h14v4H25z" fill="#1a5fa6" stroke="#eaf6fd" strokeWidth="1.3" />
          <path d="M26 9h7v2h-7zM26 18h5v2h-5z" fill="#3fd1f2" />
          <circle cx="9" cy="24" r="1.8" fill="#57d3f5" /><circle cx="15" cy="24" r="2" fill="#f7a92b" />
          <ellipse cx="23" cy="33" rx="10" ry="6.5" fill="#d9d9d9" stroke="#9b9b9b" />
        </svg>
      </TaskButton>
      <TaskButton label="Telegram" look="open">
        <svg width="46" height="44" viewBox="0 0 46 44" aria-hidden="true">
          <circle cx="23" cy="21" r="21" fill="#1f8fd0" />
          <path d="M9 22l25-11-4 19-8-4-5 5-1-8z" fill="#eef6fc" />
          <path d="M16 23l18-12-14 15-3 5z" fill="#c3dcee" />
          <rect x="23" y="29" width="23" height="15" rx="4" fill="#8d8d8d" />
          <text x="34" y="41" textAnchor="middle" fontSize="12" fill="#fff">..41</text>
        </svg>
      </TaskButton>
      <TaskButton label="Alpari" look="active">
        <svg width="44" height="26" viewBox="0 0 44 26" fill="none" strokeWidth="1.5" className="mt-0.5" aria-hidden="true">
          <path d="M1 12h2l7-7 4 2 5-6 4 4 3-2 4 3 4-2 7 7h2" stroke="#d9502e" />
          <path d="M1 16h2l7-7 4 2 5-6 4 4 3-2 4 3 4-2 7 7h2" stroke="#e89a3c" />
          <path d="M1 20h2l7-7 4 2 5-6 4 4 3-2 4 3 4-2 7 7h2" stroke="#c3c93a" />
          <path d="M1 25h2l7-7 4 2 5-6 4 4 3-2 4 3 4-2 7 7h2" stroke="#69b23c" />
        </svg>
        <span className="text-[16px] leading-5 text-[#1c2b33]">alpari</span>
      </TaskButton>
      <TaskButton label="Chrome">
        <svg width="42" height="42" viewBox="0 0 42 42" aria-hidden="true">
          <circle cx="21" cy="21" r="21" fill="#fdc93c" />
          <path d="M3 10.500A21 21 0 0020.500 42L30 26l-9-5-9 5z" fill="#1a9f57" />
          <path d="M39.500 11H21l9 15-9.500 16A21 21 0 0039.500 11z" fill="#fdc93c" />
          <path d="M3 10.500A21 21 0 0139.500 11H21a10 10 0 00-9 14z" fill="#dc4c3f" />
          <circle cx="21" cy="21" r="9.5" fill="#f4f4f4" />
          <circle cx="21" cy="21" r="7.5" fill="#4585f3" />
        </svg>
      </TaskButton>
      <TaskButton label="Notepad" look="stacked">
        <svg width="44" height="42" viewBox="0 0 44 42" aria-hidden="true">
          <path d="M38 6l4 2v27l-7 4z" fill="#a8895a" />
          <path d="M16 3l25 4-8 34-22-6z" fill="#f0f2f3" stroke="#c2c8cb" />
          <path d="M16 4l22 3-12 29L1 29z" fill="#4aa5bb" />
          <path d="M16 4l22 3-9 22Q18 14 11 14z" fill="#a5d9e2" />
          <path d="M17 3l23 4" stroke="#8b8f92" strokeWidth="4" strokeDasharray="1.5 1.5" />
        </svg>
      </TaskButton>

      <div className="mt-auto flex flex-col pb-[11px] text-[16px]">
        <span className="ml-[15px] w-0 border-y-[5px] border-r-[6px] border-y-transparent border-r-[#12303a]" />
        <div className="mt-[18px] grid grid-cols-2 gap-y-2.5 pr-2 pl-2.5">
          <svg width="24" height="24" viewBox="0 0 24 24" aria-hidden="true">
            <path d="M1 8h4l6-6v19l-6-6H1z" fill="#f5f5f5" stroke="#4e6a75" />
            <circle cx="16.500" cy="16.500" r="6.5" fill="#e0332a" />
            <path d="M14 14l5 5M19 14l-5 5" stroke="#fff" strokeWidth="2" />
          </svg>
          <svg width="24" height="24" viewBox="0 0 24 24" fill="none" aria-hidden="true">
            <path d="M8 5h14v12H9M15 17v4M10 21h10" stroke="#37545f" strokeWidth="4" />
            <path d="M8 5h14v12H9M15 17v4M10 21h10" stroke="#fff" strokeWidth="1.8" />
            <path d="M2 2h6v6H6v14H4V8H2z" fill="#fff" stroke="#37545f" />
          </svg>
          <svg width="24" height="24" viewBox="0 0 24 24" aria-hidden="true">
            <path d="M2 2h3v21H2zM5 3h9v3h8l-3 5 1 1h-8v-2H5z" fill="#fff" stroke="#4e6a75" />
          </svg>
        </div>
        <span className="mt-4 text-center leading-6">ENG</span>
        <time className="mt-3.5 text-center leading-6">
          9:05 AM
          <br />
          7/24/2021
        </time>
      </div>
    </aside>
  );
}

function RemoteOverlay() {
  return (
    <div className="absolute top-0 right-[158px] z-10 flex h-[132px] w-[303px] items-start bg-black/50">
      <button aria-label="Menu" className="mt-[43px] ml-9 flex w-[81px] flex-col gap-3">
        <span className="h-2 bg-white" />
        <span className="h-2 bg-white" />
        <span className="h-2 bg-white" />
      </button>
      <span className="mt-[33px] ml-[33px] h-[66px] w-[3px] bg-[#adadad]" />
      <button aria-label="Keyboard" className="mt-[42px] ml-9">
        <svg width="76" height="47" viewBox="0 0 76 47" aria-hidden="true">
          <rect width="76" height="47" rx="6" fill="#fff" />
          <rect x="7" y="7" width="62" height="33" fill="#6e6e6e" />
          <path
            d="M10 10h7v7h-7zM20 10h7v7h-7zM30 10h7v7h-7zM40 10h7v7h-7zM50 10h7v7h-7zM60 10h6v7h-6zM10 20h12v7H10zM25 20h7v7h-7zM35 20h7v7h-7zM45 20h6v7h-6zM54 20h12v7H54zM10 30h12v7H10zM25 30h26v7H25zM54 30h12v7H54z"
            fill="#fff"
          />
        </svg>
      </button>
    </div>
  );
}

export default function App() {
  return (
    <div className="relative flex h-screen w-full overflow-hidden bg-black pb-0.5 font-['Open_Sans','Noto_Sans',sans-serif]">
      <div className="flex min-w-0 flex-1 flex-col bg-[#f0f0f0]">
        <TitleBar />
        <MenuBar />
        <MainToolbar />
        <TimeframeBar />
        <DrawingBar />
        <div className="flex min-h-0 flex-1">
          <Navigator />
          <main className="flex min-w-0 flex-1 flex-col">
            <ChartWindow />
            <ChartTabs />
          </main>
        </div>
        <StatusBar />
      </div>
      <Taskbar />
      <RemoteOverlay />
    </div>
  );
}
